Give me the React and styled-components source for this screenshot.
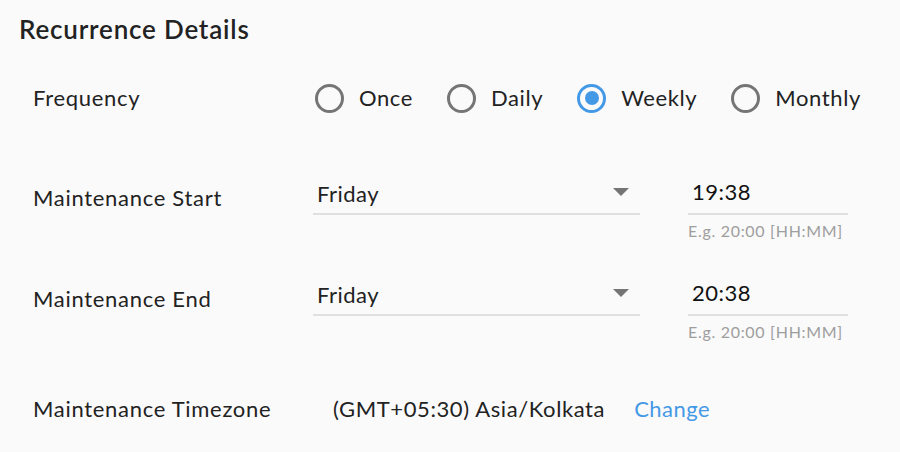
import React, { useState } from 'react';
import styled, { createGlobalStyle } from 'styled-components';

const GlobalStyle = createGlobalStyle`
  html, body {
    margin: 0;
    padding: 0;
    background: #fafafa;
  }
  body {
    font-family: Lato, "Noto Sans", "Liberation Sans", sans-serif;
    color: #222;
  }
`;

const FREQUENCIES = ['Once', 'Daily', 'Weekly', 'Monthly'];

const App = () => {
  const [frequency, setFrequency] = useState('Weekly');

  return (
    <>
      <GlobalStyle />
      <Page>
        <Title>Recurrence Details</Title>

        <FreqRow>
          <Label>Frequency</Label>
          <RadioGroup>
            {FREQUENCIES.map((f) => (
              <RadioItem key={f} onClick={() => setFrequency(f)}>
                <RadioCircle $checked={frequency === f} />
                <RadioText>{f}</RadioText>
              </RadioItem>
            ))}
          </RadioGroup>
        </FreqRow>

        <FieldRow>
          <FieldLabel>Maintenance Start</FieldLabel>
          <Select>
            <SelectValue>Friday</SelectValue>
            <Caret />
          </Select>
          <TimeGroup>
            <TimeInput defaultValue="19:38" />
            <Helper>E.g. 20:00 [HH:MM]</Helper>
          </TimeGroup>
        </FieldRow>

        <FieldRow>
          <FieldLabel>Maintenance End</FieldLabel>
          <Select>
            <SelectValue>Friday</SelectValue>
            <Caret />
          </Select>
          <TimeGroup>
            <TimeInput defaultValue="20:38" />
            <Helper>E.g. 20:00 [HH:MM]</Helper>
          </TimeGroup>
        </FieldRow>

        <ZoneRow>
          <Label>Maintenance Timezone</Label>
          <ZoneValue>(GMT+05:30) Asia/Kolkata</ZoneValue>
          <ChangeLink>Change</ChangeLink>
        </ZoneRow>
      </Page>
    </>
  );
};

export default App;

const Page = styled.div`
  width: 900px;
  height: 452px;
  overflow: hidden;
`;

const Title = styled.h2`
  margin: 0;
  padding: 13px 19px 0;
  font-size: 26px;
  line-height: 32px;
  font-weight: 600;
  letter-spacing: 0.8px;
  color: #222;
`;

const FreqRow = styled.div`
  display: flex;
  align-items: center;
  height: 56px;
  margin-top: 25px;
  padding-left: 33px;
`;

const Label = styled.div`
  width: 280px;
  flex-shrink: 0;
  font-size: 22px;
  line-height: 30px;
  letter-spacing: 0.7px;
  color: #222;
`;

const RadioGroup = styled.div`
  display: flex;
  align-items: center;
  gap: 34px;
  margin-left: 2px;
`;

const RadioItem = styled.label`
  display: flex;
  align-items: center;
  gap: 15px;
  cursor: pointer;
`;

const RadioCircle = styled.span`
  position: relative;
  width: 29px;
  height: 29px;
  box-sizing: border-box;
  border-radius: 50%;
  border: 3px solid ${(p) => (p.$checked ? '#4499e6' : '#757575')};

  &::after {
    content: '';
    display: ${(p) => (p.$checked ? 'block' : 'none')};
    position: absolute;
    left: 50%;
    top: 50%;
    width: 14px;
    height: 14px;
    border-radius: 50%;
    background: #4499e6;
    transform: translate(-50%, -50%);
  }
`;

const RadioText = styled.span`
  font-size: 22px;
  line-height: 30px;
  letter-spacing: 0.6px;
  color: #222;
`;

const FieldRow = styled.div`
  display: flex;
  align-items: flex-start;
  height: 101px;
  padding-left: 33px;

  ${FreqRow} + & {
    margin-top: 44px;
  }
`;

const FieldLabel = styled(Label)`
  padding-top: 13px;
`;

const Select = styled.div`
  display: flex;
  align-items: center;
  justify-content: space-between;
  width: 327px;
  box-sizing: border-box;
  padding: 9px 11px 4px 4px;
  border-bottom: 2px solid #e0e0e0;
  cursor: pointer;
`;

const SelectValue = styled.span`
  font-size: 22px;
  line-height: 30px;
  letter-spacing: 0.5px;
  color: #222;
`;

const Caret = styled.span`
  width: 0;
  height: 0;
  margin-top: -4px;
  border-left: 8px solid transparent;
  border-right: 8px solid transparent;
  border-top: 8px solid #757575;
`;

const TimeGroup = styled.div`
  display: flex;
  flex-direction: column;
  width: 160px;
  margin-left: 48px;
`;

const TimeInput = styled.input`
  width: 100%;
  box-sizing: border-box;
  padding: 7px 4px 6px;
  border: none;
  border-bottom: 2px solid #e0e0e0;
  background: transparent;
  font-family: inherit;
  font-size: 22px;
  line-height: 30px;
  letter-spacing: 0.5px;
  color: #111;
  outline: none;
`;

const Helper = styled.div`
  margin-top: 6px;
  font-size: 16px;
  line-height: 20px;
  letter-spacing: 0.7px;
  color: #9e9e9e;
`;

const ZoneRow = styled.div`
  display: flex;
  align-items: center;
  height: 74px;
  padding-left: 33px;
`;

const ZoneValue = styled.span`
  margin-left: 20px;
  font-size: 22px;
  line-height: 30px;
  letter-spacing: 0.6px;
  color: #222;
`;

const ChangeLink = styled.a`
  margin-left: 29px;
  font-size: 22px;
  line-height: 30px;
  letter-spacing: 0.5px;
  color: #4499e6;
  cursor: pointer;
`;
